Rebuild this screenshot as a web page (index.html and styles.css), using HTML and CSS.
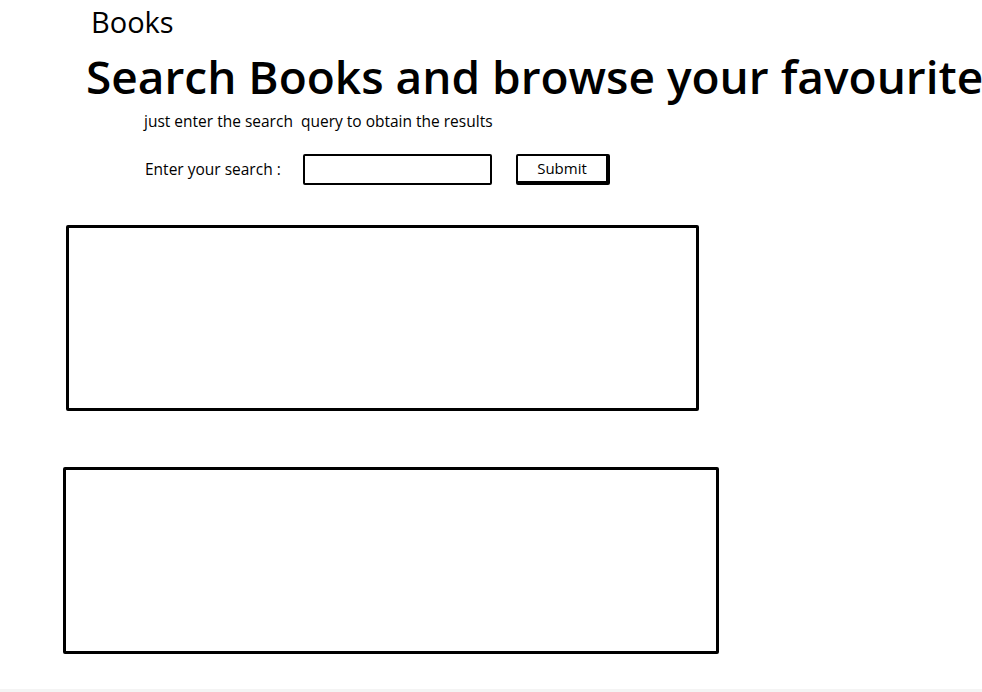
FILE: index.html
```html
<!DOCTYPE html>
<html lang="en">
<head>
<meta charset="utf-8">
<title>Books</title>
<link rel="stylesheet" href="styles.css">
</head>
<body>
<div class="page">
  <div class="brand">Books</div>
  <h1 class="title">Search Books and browse your favourites</h1>
  <p class="lead">just enter the search&nbsp; query to obtain the results</p>
  <form class="search-row">
    <label class="search-label" for="q">Enter your search :</label>
    <input class="search-input" id="q" type="text">
    <button class="submit" type="button">Submit</button>
  </form>
  <section class="results">
    <div class="result-box result-one"></div>
    <div class="result-box result-two"></div>
  </section>
</div>
<div class="footer-strip"></div>
</body>
</html>
```

FILE: styles.css
```css
html, body {
  margin: 0;
  padding: 0;
  background: #ffffff;
  overflow: hidden;
}
body {
  width: 982px;
  height: 692px;
  position: relative;
  font-family: "Open Sans", "Noto Sans", sans-serif;
  color: #000;
}
.page {
  display: flex;
  flex-direction: column;
  height: 689px;
}
.brand {
  margin: 5px 0 0 91px;
  font-size: 29px;
  line-height: 34px;
  white-space: nowrap;
}
.title {
  margin: 9px 0 0 86px;
  font-size: 46px;
  font-weight: 600;
  line-height: 56px;
  white-space: nowrap;
}
.lead {
  margin: 7px 0 0 144px;
  font-size: 15.5px;
  line-height: 20px;
}
.search-row {
  display: flex;
  align-items: center;
  margin: 22px 0 0 145px;
  height: 32px;
}
.search-label {
  font-size: 15.5px;
  width: 158px;
}
.search-input {
  box-sizing: border-box;
  width: 189px;
  height: 31px;
  border: 2.5px solid #000;
  border-radius: 2px;
  margin: 0;
  padding: 0 6px;
  background: #fff;
  font: inherit;
}
.submit {
  box-sizing: border-box;
  margin: 0 0 0 24px;
  width: 94px;
  height: 31px;
  border: 2px solid #000;
  border-right-width: 4px;
  border-bottom-width: 4px;
  border-radius: 2px;
  background: #fff;
  font-family: inherit;
  font-size: 15px;
  color: #000;
  padding: 0;
}
.results {
  display: flex;
  flex-direction: column;
  margin-top: 40px;
}
.result-box {
  box-sizing: border-box;
  border: 3px solid #000;
  border-radius: 2px;
  background: #fff;
}
.result-one {
  margin-left: 66px;
  width: 633px;
  height: 186px;
}
.result-two {
  margin: 56px 0 0 63px;
  width: 656px;
  height: 187px;
}
.footer-strip {
  height: 3px;
  background: #f4f4f4;
}
```
